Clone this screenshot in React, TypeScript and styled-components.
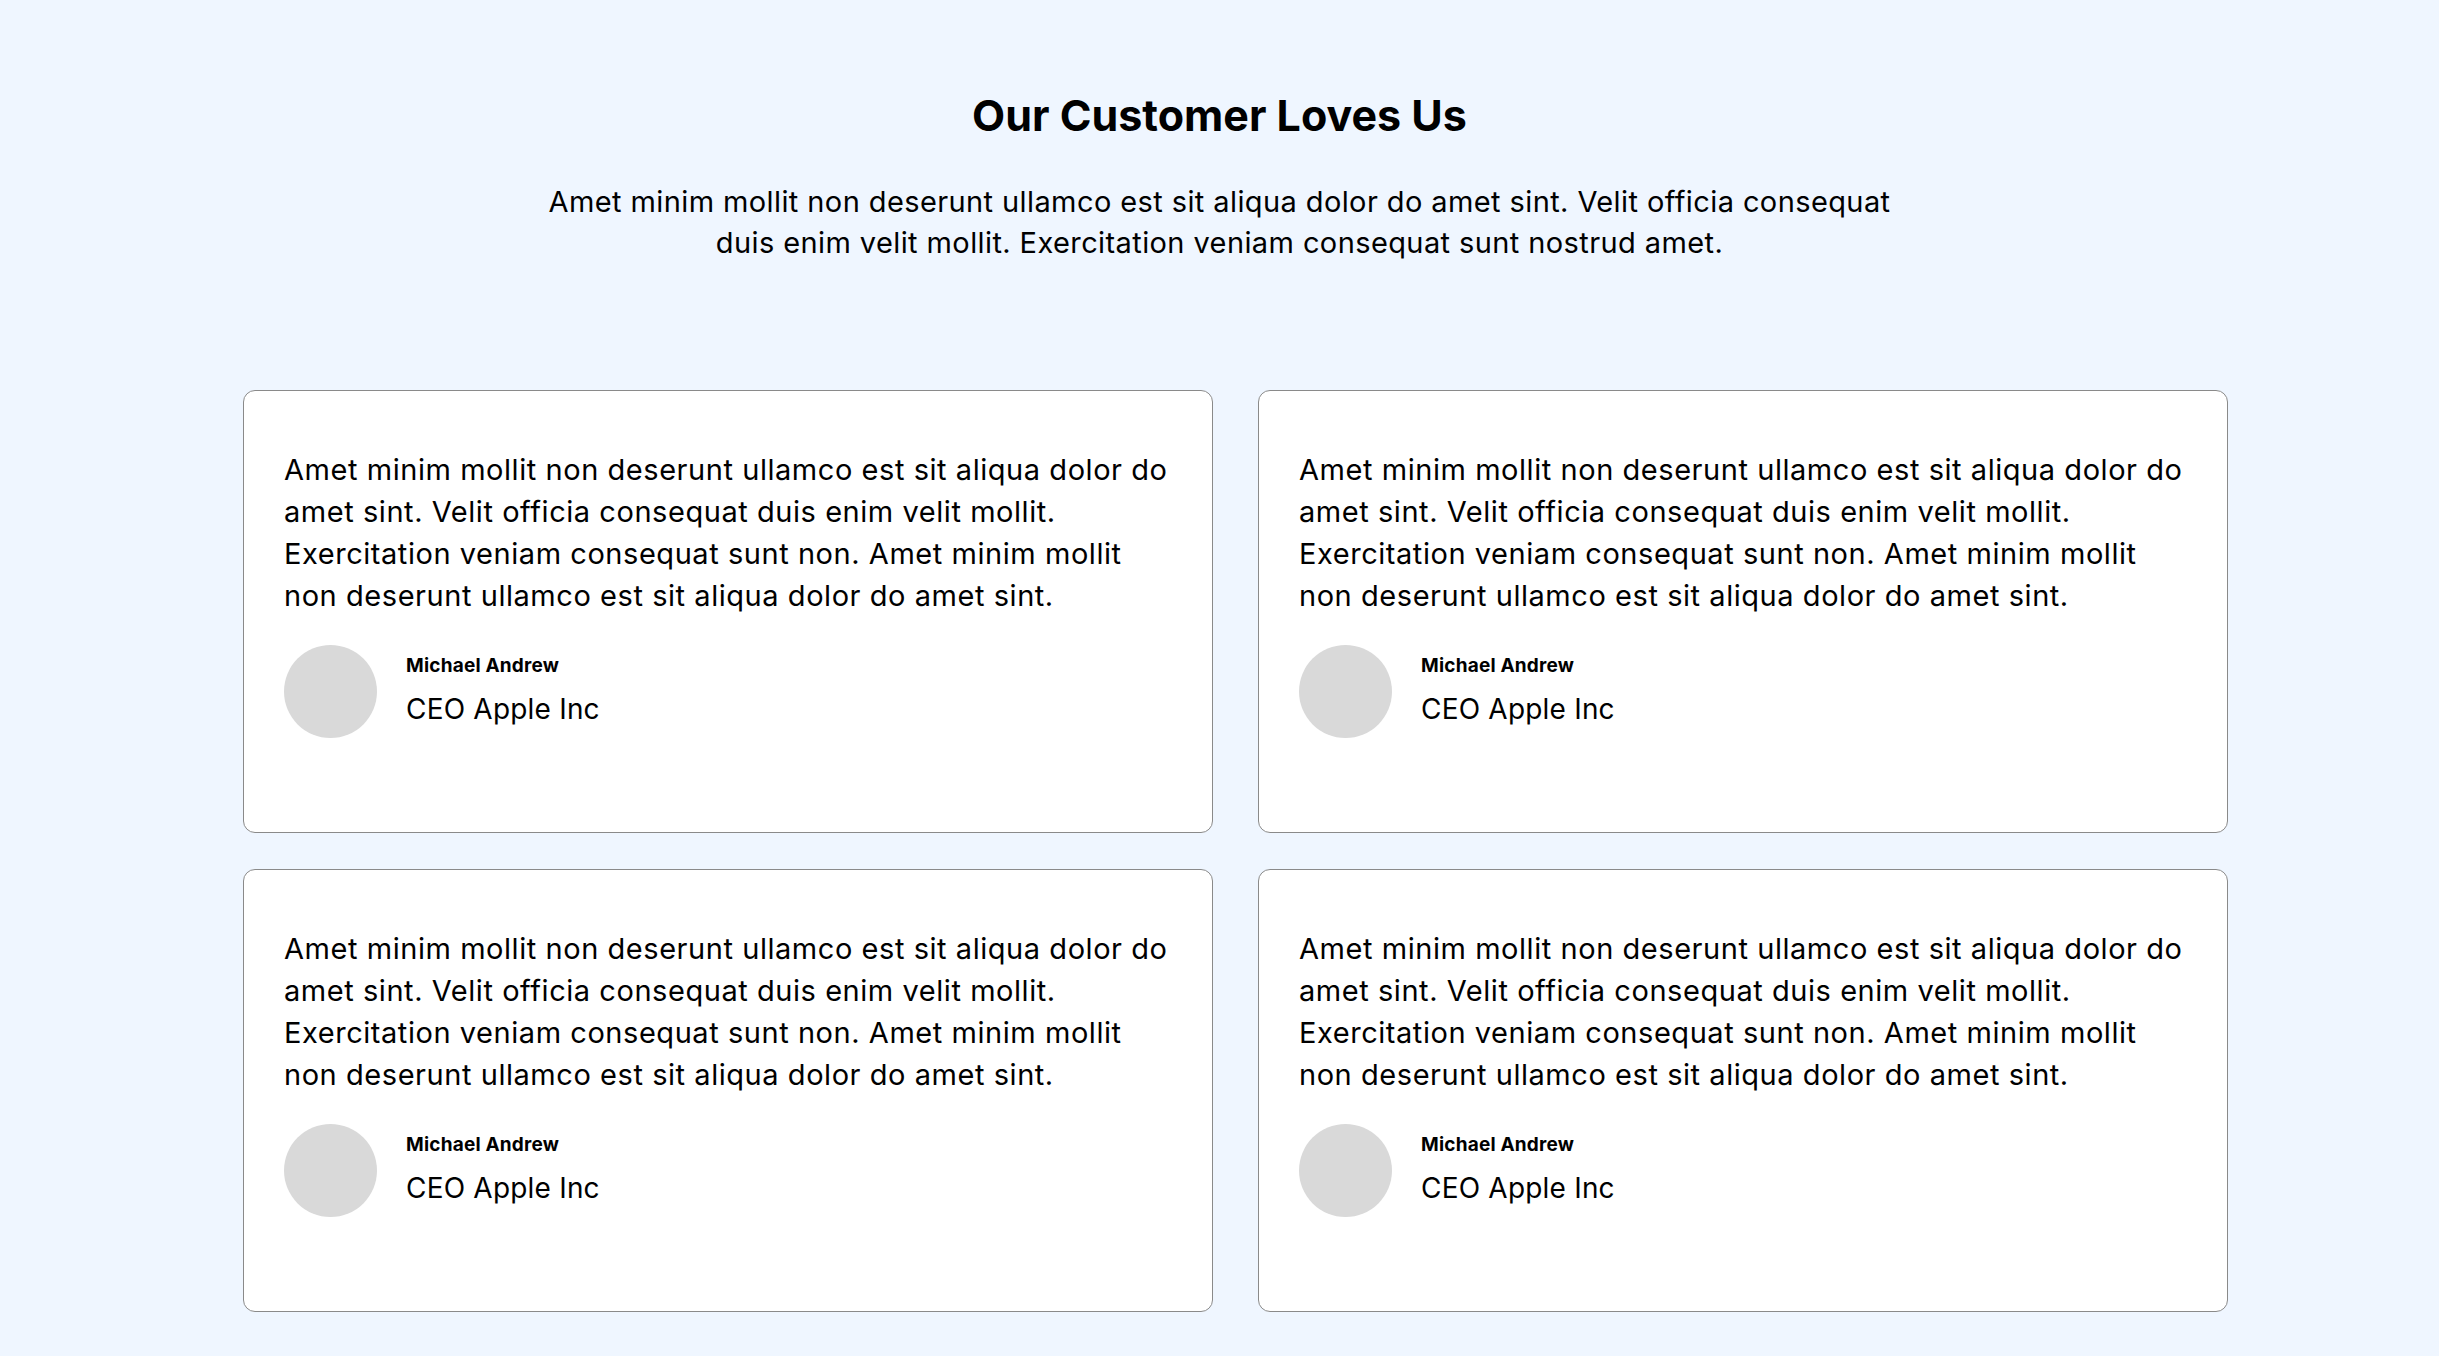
import React from 'react';
import styled, { createGlobalStyle } from 'styled-components';

const GlobalStyle = createGlobalStyle`
  * {
    box-sizing: border-box;
  }

  body {
    margin: 0;
    background: #eff6ff;
    font-family: Inter, 'Open Sans', sans-serif;
    color: #000;
  }
`;

const Page = styled.main`
  min-height: 100vh;
  padding: 90px 0 60px;
`;

const Header = styled.header`
  display: flex;
  flex-direction: column;
  align-items: center;
  text-align: center;
  gap: 39px;
`;

const Title = styled.h1`
  margin: 0;
  font-size: 43px;
  line-height: 1.2;
  font-weight: 700;
`;

const Subtitle = styled.p`
  margin: 0;
  width: 1390px;
  font-size: 29px;
  line-height: 41px;
  letter-spacing: 0.4px;
  font-weight: 400;
`;

const Grid = styled.section`
  display: grid;
  grid-template-columns: repeat(2, 970px);
  gap: 36px 45px;
  margin: 127px 0 0 243px;
`;

const Card = styled.article`
  height: 443px;
  padding: 58px 36px 0 40px;
  background: #fff;
  border: 1px solid #8a8a8a;
  border-radius: 12px;
  display: flex;
  flex-direction: column;
  gap: 28px;
`;

const Quote = styled.p`
  margin: 0;
  font-size: 29px;
  line-height: 42px;
  letter-spacing: 0.55px;
`;

const Author = styled.div`
  display: flex;
  align-items: center;
  gap: 29px;
`;

const Avatar = styled.div`
  width: 93px;
  height: 93px;
  border-radius: 50%;
  background: #d9d9d9;
  flex-shrink: 0;
`;

const AuthorInfo = styled.div`
  display: flex;
  flex-direction: column;
  gap: 9px;
`;

const Name = styled.span`
  font-size: 19px;
  line-height: 27px;
  font-weight: 700;
  letter-spacing: 0.2px;
`;

const Role = styled.span`
  font-size: 28px;
  line-height: 42px;
  letter-spacing: 0.2px;
`;

const quote =
  'Amet minim mollit non deserunt ullamco est sit aliqua dolor do amet sint. Velit officia consequat duis enim velit mollit. Exercitation veniam consequat sunt non. Amet minim mollit non deserunt ullamco est sit aliqua dolor do amet sint.';

const testimonials = [1, 2, 3, 4].map(id => ({
  id,
  quote,
  name: 'Michael Andrew',
  role: 'CEO Apple Inc'
}));

const App = () => (
  <>
    <GlobalStyle />
    <Page>
      <Header>
        <Title>Our Customer Loves Us</Title>
        <Subtitle>
          Amet minim mollit non deserunt ullamco est sit aliqua dolor do amet sint. Velit officia consequat duis enim velit mollit. Exercitation veniam consequat sunt nostrud amet.
        </Subtitle>
      </Header>
      <Grid>
        {testimonials.map(item => (
          <Card key={item.id}>
            <Quote>{item.quote}</Quote>
            <Author>
              <Avatar />
              <AuthorInfo>
                <Name>{item.name}</Name>
                <Role>{item.role}</Role>
              </AuthorInfo>
            </Author>
          </Card>
        ))}
      </Grid>
    </Page>
  </>
);

export default App;
